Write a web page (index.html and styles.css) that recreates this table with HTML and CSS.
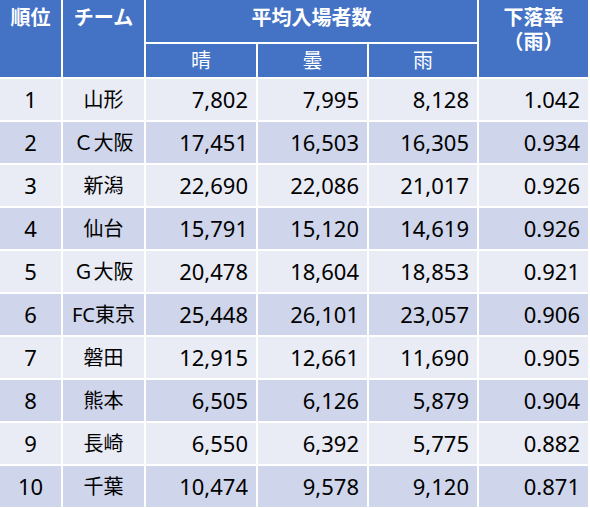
FILE: index.html
```html
<!DOCTYPE html>
<html lang="ja">
<head>
<meta charset="utf-8">
<title>平均入場者数</title>
<link rel="stylesheet" href="styles.css">
</head>
<body>
<div class="table">
  <div class="th head-top span-rows">順位</div>
  <div class="th head-top span-rows">チーム</div>
  <div class="th head-top span-cols">平均入場者数</div>
  <div class="th head-top span-rows">下落率<br>（雨）</div>
  <div class="th sub">晴</div>
  <div class="th sub">曇</div>
  <div class="th sub">雨</div>

  <div class="td rank odd">1</div><div class="td team odd">山形</div><div class="td num odd">7,802</div><div class="td num odd">7,995</div><div class="td num odd">8,128</div><div class="td num odd">1.042</div>
  <div class="td rank even">2</div><div class="td team even">Ｃ大阪</div><div class="td num even">17,451</div><div class="td num even">16,503</div><div class="td num even">16,305</div><div class="td num even">0.934</div>
  <div class="td rank odd">3</div><div class="td team odd">新潟</div><div class="td num odd">22,690</div><div class="td num odd">22,086</div><div class="td num odd">21,017</div><div class="td num odd">0.926</div>
  <div class="td rank even">4</div><div class="td team even">仙台</div><div class="td num even">15,791</div><div class="td num even">15,120</div><div class="td num even">14,619</div><div class="td num even">0.926</div>
  <div class="td rank odd">5</div><div class="td team odd">Ｇ大阪</div><div class="td num odd">20,478</div><div class="td num odd">18,604</div><div class="td num odd">18,853</div><div class="td num odd">0.921</div>
  <div class="td rank even">6</div><div class="td team even">FC東京</div><div class="td num even">25,448</div><div class="td num even">26,101</div><div class="td num even">23,057</div><div class="td num even">0.906</div>
  <div class="td rank odd">7</div><div class="td team odd">磐田</div><div class="td num odd">12,915</div><div class="td num odd">12,661</div><div class="td num odd">11,690</div><div class="td num odd">0.905</div>
  <div class="td rank even">8</div><div class="td team even">熊本</div><div class="td num even">6,505</div><div class="td num even">6,126</div><div class="td num even">5,879</div><div class="td num even">0.904</div>
  <div class="td rank odd">9</div><div class="td team odd">長崎</div><div class="td num odd">6,550</div><div class="td num odd">6,392</div><div class="td num odd">5,775</div><div class="td num odd">0.882</div>
  <div class="td rank even">10</div><div class="td team even">千葉</div><div class="td num even">10,474</div><div class="td num even">9,578</div><div class="td num even">9,120</div><div class="td num even">0.871</div>
</div>
</body>
</html>
```

FILE: styles.css
```css
html, body {
  margin: 0;
  padding: 0;
  background: #ffffff;
}

.table {
  display: grid;
  grid-template-columns: 61px 81px 110px 109px 108px 109px;
  grid-template-rows: 42px 33px repeat(10, 41px);
  gap: 2px;
  padding-right: 2px;
  padding-bottom: 1px;
  width: 588px;
  background: #ffffff;
  font-family: "Noto Sans", "Noto Sans CJK JP", sans-serif;
  color: #000000;
}

.th {
  background: #4472c4;
  color: #ffffff;
  font-size: 20px;
  line-height: 24px;
  text-align: center;
}

.head-top {
  font-weight: 700;
  padding-top: 6px;
}

.span-rows {
  grid-row: span 2;
}

.span-cols {
  grid-column: span 3;
}

.sub {
  font-weight: 400;
  display: flex;
  align-items: center;
  justify-content: center;
}

.td {
  line-height: 41px;
  font-size: 22px;
  white-space: nowrap;
}

.odd {
  background: #e9ebf5;
}

.even {
  background: #cfd5ea;
}

.rank {
  text-align: center;
}

.team {
  text-align: center;
  font-size: 20px;
}

.num {
  text-align: right;
  padding-right: 8px;
}
```
